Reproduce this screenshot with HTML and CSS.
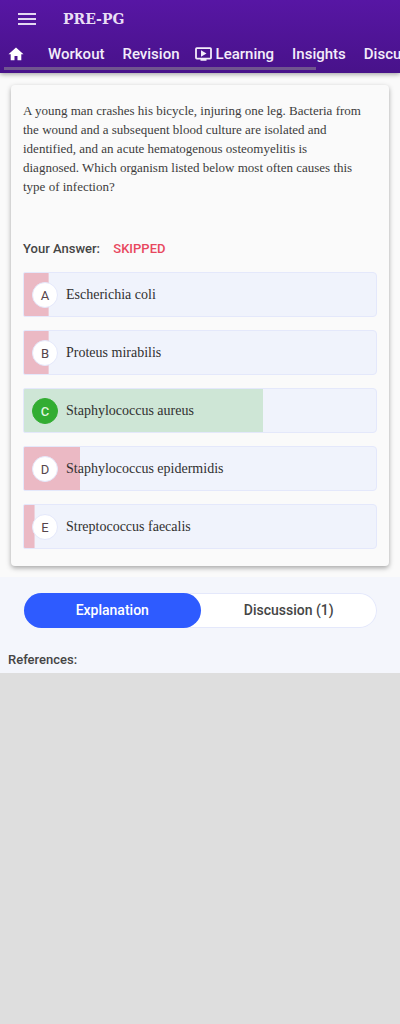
FILE: index.html
```html
<!DOCTYPE html>
<html lang="en">
<head>
<meta charset="utf-8">
<meta name="viewport" content="width=device-width, initial-scale=1">
<title>PRE-PG</title>
<link rel="stylesheet" href="styles.css">
</head>
<body>
<header class="topbar">
  <div class="brand-row">
    <button class="menu-button" type="button" aria-label="Menu">
      <svg width="20" height="14" viewBox="0 0 20 14" aria-hidden="true"><path d="M1 2h18M1 7h18M1 12h18" stroke="currentColor" stroke-width="1.8" fill="none"/></svg>
    </button>
    <span class="brand">PRE-PG</span>
  </div>
  <nav class="tabs">
    <a class="home" href="#" aria-label="Home">
      <svg width="16" height="14" viewBox="0 0 16 14" aria-hidden="true"><path d="M8 0.5L0.5 7.3H2.7V13.3H6.5V9H9.5V13.3H13.3V7.3H15.5Z" fill="currentColor"/></svg>
    </a>
    <a href="#">Workout</a>
    <a href="#">Revision</a>
    <a class="learning" href="#">
      <svg width="17" height="14" viewBox="0 0 17 14" aria-hidden="true"><rect x="1" y="1.2" width="15" height="10.4" rx="0.8" fill="none" stroke="currentColor" stroke-width="1.8"/><path d="M6 3.3V9.7L11.5 6.5ZM5.5 11.5H11.5V13.7H5.5Z" fill="currentColor"/></svg>Learning</a>
    <a href="#">Insights</a>
    <a href="#">Discussion</a>
  </nav>
  <div class="scroll-track"></div>
</header>
<main>
  <section class="card">
    <p class="question">A young man crashes his bicycle, injuring one leg. Bacteria from<br>the wound and a subsequent blood culture are isolated and<br>identified, and an acute hematogenous osteomyelitis is<br>diagnosed. Which organism listed below most often causes this<br>type of infection?</p>
    <p class="your-answer">Your Answer: <span class="skipped">SKIPPED</span></p>
    <ul class="options">
      <li class="option" style="--share: 7%"><span class="letter">A</span><span>Escherichia coli</span></li>
      <li class="option" style="--share: 7%"><span class="letter">B</span><span>Proteus mirabilis</span></li>
      <li class="option correct" style="--share: 68%"><span class="letter">C</span><span>Staphylococcus aureus</span></li>
      <li class="option" style="--share: 16%"><span class="letter">D</span><span>Staphylococcus epidermidis</span></li>
      <li class="option" style="--share: 3%"><span class="letter">E</span><span>Streptococcus faecalis</span></li>
    </ul>
  </section>
  <section class="details">
    <div class="switch">
      <button class="active" type="button">Explanation</button>
      <button type="button">Discussion (1)</button>
    </div>
    <p class="references">References:</p>
  </section>
</main>
</body>
</html>
```

FILE: styles.css
```css
* { box-sizing: border-box; }
body {
  margin: 0;
  background: #dedede;
  color: #454545;
  font: 500 13px/16px Roboto, sans-serif;
  overflow-x: hidden;
}
p, ul { margin: 0; padding: 0; }
button { font: inherit; color: inherit; border: 0; padding: 0; background: none; }
svg { display: block; flex: none; }

.topbar {
  position: relative;
  padding-bottom: 3px;
  background: linear-gradient(#5716a4, #48128a);
  color: #f3edfa;
  box-shadow: 0 1px 5px rgba(0, 0, 0, 0.4);
}
.brand-row {
  display: flex;
  align-items: center;
  gap: 26px;
  height: 38px;
  padding-left: 17px;
}
.menu-button { color: #e4d8f2; }
.brand { font: 700 14px/20px "DejaVu Serif", serif; color: #e9def5; }
.tabs {
  display: flex;
  align-items: center;
  gap: 18px;
  height: 29px;
  padding: 3px 0 0 8px;
  overflow: hidden;
  font-size: 15px;
  line-height: 20px;
  white-space: nowrap;
}
.tabs a { flex: none; color: inherit; text-decoration: none; }
.tabs .home { margin-right: 6px; color: #fff; }
.tabs .learning { display: flex; align-items: center; gap: 4px; margin-left: -3px; }
.scroll-track { width: 78%; height: 3px; margin-left: 4px; background: #70558f; }

main { background: #fafafa; padding-top: 12px; }
.card {
  margin: 0 11px 11px;
  padding: 16px 12px 17px;
  border-radius: 4px;
  background: #fafafa;
  box-shadow: 0 2px 5px rgba(0, 0, 0, 0.34);
}
.question {
  font: 400 13px/19px "Liberation Serif", serif;
  color: #3c3c3c;
}
.your-answer { margin-top: 45px; }
.skipped { margin-left: 10px; color: #e8485e; }
.options {
  display: flex;
  flex-direction: column;
  gap: 13px;
  margin-top: 15px;
  list-style: none;
}
.option {
  display: flex;
  align-items: center;
  gap: 8px;
  height: 45px;
  padding-left: 8px;
  border: 1px solid #e4e8fb;
  border-radius: 2px 4px 4px 2px;
  background: linear-gradient(#ebb9c4, #ebb9c4) 0 0 / var(--share) 100% no-repeat #f0f3fc;
  font: 400 14px/18px "Liberation Serif", serif;
  color: #303030;
}
.letter {
  flex: none;
  width: 26px;
  height: 26px;
  border: 1px solid #e4e8fb;
  border-radius: 50%;
  background: #fff;
  color: #55454b;
  text-align: center;
  font: 400 13px/25px Roboto, sans-serif;
}
.correct { background-image: linear-gradient(#cee6d6, #cee6d6); }
.correct .letter { border-color: #32ad32; background: #32ad32; color: #dff5df; font-weight: 500; }

.details { padding: 16px 8px 5px; background: #f4f6fc; }
.switch {
  display: flex;
  margin: 0 15px 0 16px;
  border-radius: 18px;
  background: #fff;
  box-shadow: inset 0 0 0 1px #e4e8fb;
}
.switch button { flex: 1; height: 35px; padding-bottom: 2px; border-radius: 18px; font-size: 14px; }
.switch .active { background: #2e5bff; color: #fff; }
.references { margin-top: 24px; }
```
